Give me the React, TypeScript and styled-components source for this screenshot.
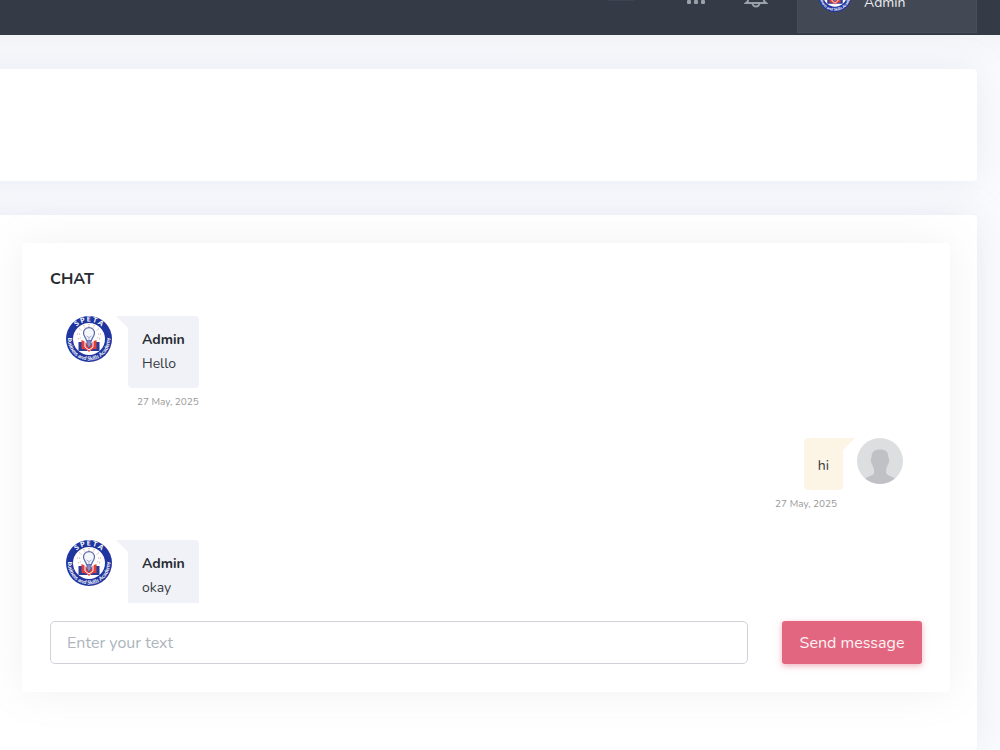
import React, { useId } from 'react';
import styled, { createGlobalStyle } from 'styled-components';

const Global = createGlobalStyle`
  * { box-sizing: border-box; }
  body {
    margin: 0;
    background: #fafbfe;
    color: #343a40;
    font-family: Nunito, Lato, sans-serif;
    font-size: 14px;
    line-height: 24px;
  }
`;

const Page = styled.div`
  display: flex;
  flex-direction: column;
  height: 100vh;
  overflow: hidden;
`;

const Header = styled.header`
  display: flex;
  flex: none;
  align-items: flex-end;
  justify-content: flex-end;
  height: 35px;
  padding: 0 23px 2px 0;
  overflow: hidden;
  background: #343a46;
`;

const HeaderShade = styled.div`
  flex: none;
  height: 34px;
  background: linear-gradient(#f3f4f7, #f7f8fc 45%, #fafbfe);
`;

const IconButton = styled.button`
  display: flex;
  align-items: flex-end;
  justify-content: center;
  width: 60px;
  height: 60px;
  padding: 0 0 23px;
  border: 0;
  background: none;
  color: #9a9fa8;
`;

const Flag = styled(IconButton)`
  width: 50px;
  margin-right: 20px;
  padding-bottom: 32px;
`;

const UserLink = styled.a`
  display: flex;
  flex: none;
  align-items: flex-end;
  gap: 12px;
  width: 180px;
  height: 70px;
  margin-left: 11px;
  padding: 0 20px 20px;
  background: #424854;
  border: 1px solid #474d59;
  color: #eceef1;
  line-height: 18px;
  text-decoration: none;
`;

const Main = styled.main`
  display: flex;
  flex: 1;
  flex-direction: column;
  gap: 34px;
  min-height: 0;
  margin-left: -40px;
  padding-right: 23px;
`;

const Panel = styled.section`
  flex: none;
  min-height: 112px;
  background: #fff;
  border-radius: 4px;
  box-shadow: 0 0 35px rgba(154, 161, 191, 0.18);
`;

const ContentPanel = styled(Panel)`
  flex: 1;
  padding: 28px 27px 58px 62px;
`;

const ChatCard = styled.section`
  padding: 24px 28px 28px;
  background: #fff;
  border-radius: 4px;
  box-shadow: 0 0 39px rgba(150, 150, 150, 0.13);
`;

const Title = styled.h4`
  margin: 0 0 25px;
  color: #272c31;
  font-size: 16px;
  font-weight: 700;
  line-height: 24px;
`;

const Messages = styled.ul`
  height: 287px;
  margin: 0 0 18px;
  padding: 0 19px 0 16px;
  overflow: hidden;
  list-style: none;
`;

const Message = styled.li<{ $own?: boolean }>`
  display: flex;
  flex-direction: ${p => (p.$own ? 'row-reverse' : 'row')};
  align-items: flex-start;
  gap: ${p => (p.$own ? 14 : 16)}px;
  margin-bottom: 22px;
`;

const Body = styled.div`
  display: flex;
  flex-direction: column;
  align-items: flex-end;
`;

const Bubble = styled.div<{ $own?: boolean }>`
  position: relative;
  display: flex;
  flex-direction: column;
  padding: ${p => (p.$own ? '16px 14px 12px' : '12px 14px')};
  border-radius: ${p => (p.$own ? '4px 0 4px 4px' : '0 4px 4px 4px')};
  background: ${p => (p.$own ? '#fcf4e5' : '#f1f2f8')};

  &::before {
    content: '';
    position: absolute;
    top: 0;
    ${p => (p.$own ? 'left: 100%' : 'right: 100%')};
    width: 12px;
    height: 12px;
    background: inherit;
    clip-path: ${p => (p.$own ? 'polygon(0 0, 100% 0, 0 100%)' : 'polygon(0 0, 100% 0, 100% 100%)')};
  }
`;

const Author = styled.strong`
  color: #272c31;
`;

const Time = styled.time<{ $own?: boolean }>`
  height: 28px;
  padding-right: ${p => (p.$own ? 6 : 0)}px;
  color: #999;
  font-size: 10px;
  line-height: 28px;
`;

const Form = styled.form`
  display: flex;
  gap: 34px;
`;

const TextInput = styled.input`
  flex: 1;
  min-width: 0;
  height: 43px;
  padding: 0 16px;
  border: 1px solid #cfd2d9;
  border-radius: 5px;
  background: #fff;
  font: inherit;
  font-size: 16px;

  &::placeholder { color: #adb5bd; opacity: 1; }
`;

const SendButton = styled.button`
  flex: none;
  width: 140px;
  height: 43px;
  padding: 0;
  border: 0;
  border-radius: 3px;
  background: #e2667f;
  box-shadow: 0 2px 6px rgba(226, 102, 127, 0.5);
  color: #fdf3f5;
  font: inherit;
  font-size: 16px;
`;

const Avatar = styled.svg`
  display: block;
  flex: none;
`;

function SchoolLogo({ size }: { size: number }) {
  const id = useId();
  return (
    <Avatar width={size} height={size} viewBox="0 0 92 92" role="img" aria-label="SPETA">
      <defs>
        <path id={`${id}t`} d="M11 46a35 35 0 0 1 70 0" />
        <path id={`${id}b`} d="M6 34A42 42 0 1 0 86 34" />
      </defs>
      <circle cx="46" cy="46" r="46" fill="#20359f" />
      <circle cx="46" cy="46" r="32" fill="#fff" />
      <g fill="#fff" fontFamily="Lato, sans-serif" textAnchor="middle">
        <text fontSize="14" fontWeight="900"><textPath href={`#${id}t`} startOffset="50%">S P E T A</textPath></text>
        <text fontSize="11" fontWeight="700"><textPath href={`#${id}b`} startOffset="50%">Business and Skills Academy</textPath></text>
      </g>
      <path
        stroke="#cf9c93"
        strokeWidth="2"
        strokeDasharray="2 2"
        d="M46 16v6M35 18l3 5M57 18l-3 5M26 25l5 4M66 25l-5 4M22 36h7M70 36h-7M24 46l6-3M68 46l-6-3"
      />
      <path d="M25 52h8l10 18H25zM67 52h-8L49 70h18z" fill="#263b9c" />
      <path d="M31 48c7 2 11 7 15 14 4-7 8-12 15-14v18c-6 0-11 1-15 6-4-5-9-6-15-6z" fill="#e23f38" />
      <path d="M38 51v11l8 6 8-6V51" fill="none" stroke="#fff" strokeWidth="2" />
      <path d="M42 48h8v10l-4 6-4-6z" fill="#8d8fc0" stroke="#3d4ea3" strokeWidth="1.500" />
      <path d="M41 49c0-5-6-7-6-15a11 11 0 0 1 22 0c0 8-6 10-6 15z" fill="#f5f7ff" stroke="#5f6ca8" strokeWidth="2.500" />
      <path d="M41 40l5 3 5-3M46 43v7" fill="none" stroke="#8b95c2" strokeWidth="1.500" />
    </Avatar>
  );
}

function Silhouette() {
  const id = useId();
  return (
    <Avatar width="46" height="46" viewBox="0 0 46 46" role="img" aria-label="User">
      <clipPath id={id}><circle cx="23" cy="23" r="23" /></clipPath>
      <circle cx="23" cy="23" r="23" fill="#dcdee0" />
      <path
        clipPath={`url(#${id})`}
        fill="#bfc1c4"
        d="M23 11.500c6 0 8.500 2.500 8.500 8.500 1 .3.800 2 .4 4-.3 1.500-.8 2.500-1.500 3-.3 2-.6 3-1.200 4v4c0 2.500 6 3 11 7v6H6v-6c5-4 11-4.500 11-7v-4c-.6-1-1.100-2-1.400-4-.7-.5-1.200-1.500-1.500-3-.4-2-.6-3.700.4-4 0-6 2.500-8.500 8.500-8.500z"
      />
    </Avatar>
  );
}

export default function App() {
  return (
    <Page>
      <Global />
      <Header>
        <Flag aria-label="Language">
          <svg width="26" height="18"><rect width="26" height="18" fill="#3d4350" /></svg>
        </Flag>
        <IconButton aria-label="Apps">
          <svg width="20" height="24" viewBox="0 0 20 24" fill="currentColor" display="block">
            {[0, 7, 14].map(y => [1, 8, 15].map(x => (
              <rect key={`${x}-${y}`} x={x} y={y} width="4" height="4" rx="1" />
            )))}
          </svg>
        </IconButton>
        <IconButton aria-label="Notifications">
          <svg width="24" height="26" viewBox="0 0 24 26" fill="none" stroke="currentColor" strokeWidth="2" display="block">
            <path d="M4 17V9a8 8 0 0 1 16 0v8l2 2H2z" />
            <path d="M8.500 19a3.500 3.500 0 0 0 7 0" />
          </svg>
        </IconButton>
        <UserLink href="#profile">
          <SchoolLogo size={34} />
          <span>Admin</span>
        </UserLink>
      </Header>
      <HeaderShade />
      <Main>
        <Panel />
        <ContentPanel>
          <ChatCard>
            <Title>CHAT</Title>
            <Messages>
              <Message>
                <SchoolLogo size={46} />
                <Body>
                  <Bubble><Author>Admin</Author><span>Hello</span></Bubble>
                  <Time>27 May, 2025</Time>
                </Body>
              </Message>
              <Message $own>
                <Silhouette />
                <Body>
                  <Bubble $own>hi</Bubble>
                  <Time $own>27 May, 2025</Time>
                </Body>
              </Message>
              <Message>
                <SchoolLogo size={46} />
                <Body>
                  <Bubble><Author>Admin</Author><span>okay</span></Bubble>
                  <Time>27 May, 2025</Time>
                </Body>
              </Message>
            </Messages>
            <Form onSubmit={e => e.preventDefault()}>
              <TextInput type="text" placeholder="Enter your text" aria-label="Enter your text" />
              <SendButton type="submit">Send message</SendButton>
            </Form>
          </ChatCard>
        </ContentPanel>
      </Main>
    </Page>
  );
}
